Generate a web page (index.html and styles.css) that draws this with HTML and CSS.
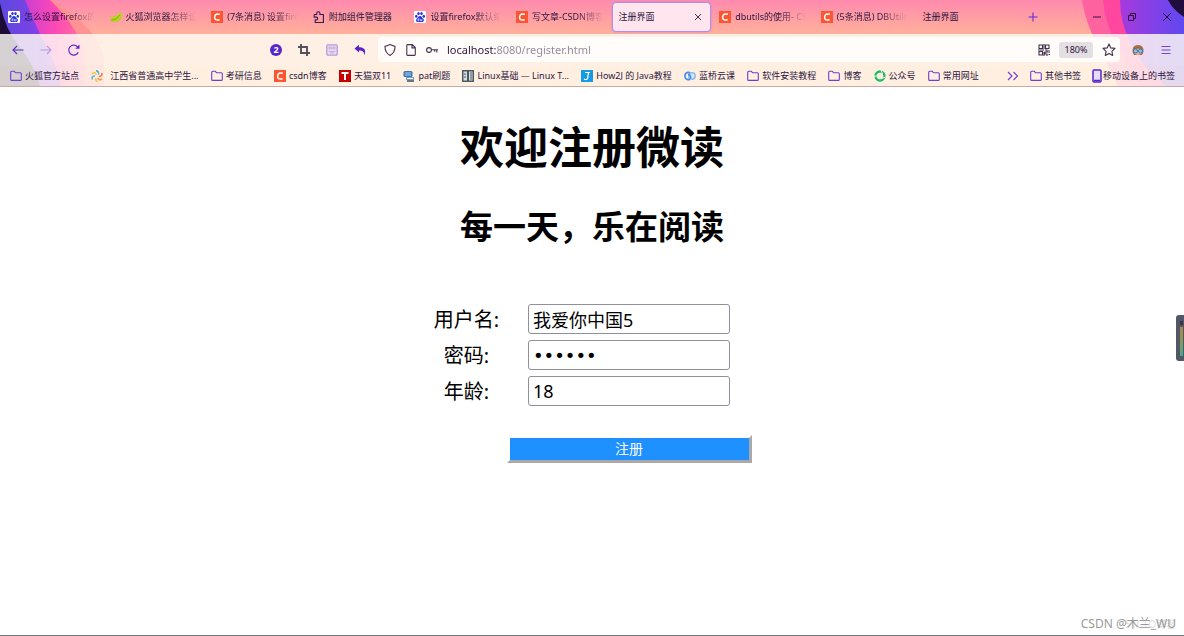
FILE: index.html
```html
<!DOCTYPE html>
<html lang="zh-CN">
<head>
<meta charset="utf-8">
<title>注册界面</title>
<link rel="stylesheet" href="styles.css">
</head>
<body>
<svg class="defs" aria-hidden="true">
  <symbol id="folder" viewBox="0 0 12 12"><path d="M.7 9.4V2.3q0-1 1-1h2.6l1.3 1.5h4.7q1 0 1 1v5.6q0 1-1 1H1.700q-1 0-1-1z" fill="none" stroke="#6b3fd0" stroke-width="1.1"/></symbol>
  <symbol id="csdn" viewBox="0 0 12 12"><path d="M0 0h12v12H0z" fill="#fc5531"/><path d="M8.900 3.300Q4.200 1.900 3.600 6q-.3 4 5 2.800" fill="none" stroke="#fff" stroke-width="1.500"/></symbol>
  <symbol id="baidu" viewBox="0 0 12 12"><rect width="12" height="12" rx="1" fill="#fff"/><g fill="#2932e1"><ellipse cx="2.300" cy="5.200" rx="1.200" ry="1.500"/><ellipse cx="4.500" cy="2.600" rx="1.200" ry="1.600"/><ellipse cx="7.500" cy="2.600" rx="1.200" ry="1.600"/><ellipse cx="9.800" cy="5.300" rx="1.200" ry="1.500"/><path d="M6 5.100c1.500 0 1.800 1.400 3 2.500 1.600 1.500.8 3.500-.9 3.500H3.800C2 11.100 1.400 9 3 7.600 4.200 6.500 4.500 5.100 6 5.100z"/></g><path d="M4.900 7.300v2.500H3.900V8.300h1M6.500 7.900v1.900h1.500V7.900" fill="none" stroke="#fff" stroke-width=".6"/></symbol>
</svg>
<header class="browser">
  <svg class="theme theme-left" viewBox="0 0 110 86" aria-hidden="true">
    <defs>
      <linearGradient id="lb" x1="0" y1="0" x2="1" y2="0"><stop offset="0" stop-color="#5c48df"/><stop offset="1" stop-color="#963dea"/></linearGradient>
      <linearGradient id="lm" x1="0" y1="0" x2="1" y2="0"><stop offset="0" stop-color="#a035e8"/><stop offset=".65" stop-color="#ff49b5"/><stop offset="1" stop-color="#ff759f"/></linearGradient>
    </defs>
    <path d="M0 0h52q46 28 52 58v28H0z" fill="#ff9292"/>
    <path d="M0 0h50q30 28 35 58v28H0z" fill="url(#lm)"/>
    <path d="M0 0h25q10 24 17 38 15 27 19 48H0z" fill="url(#lb)"/>
    <path d="M0 3Q5 30 20 47q15 20 20 39H0z" fill="#1d0c37"/>
  </svg>
  <svg class="theme theme-right" viewBox="0 0 110 86" aria-hidden="true">
    <defs><linearGradient id="rb" x1="0" y1="0" x2="1" y2="0"><stop offset="0" stop-color="#a63add"/><stop offset="1" stop-color="#6048f0"/></linearGradient></defs>
    <path d="M8 0q4 25 15 43 10 22 21 43h66V0z" fill="#ff639f"/>
    <path d="M29 0q2 27 18 51 10 20 20 35h43V0z" fill="#ff479f"/>
    <path d="M46 0q0 22 10 42 13 27 36 44h18V0z" fill="url(#rb)"/>
    <path d="M94 0q5 10 16 17V0z" fill="#210d3d"/>
  </svg>
  <div class="titlebar">
    <nav class="tabs" aria-label="标签页">
      <button class="tab"><svg class="fav"><use href="#baidu"/></svg><span>怎么设置firefox的</span></button>
      <button class="tab"><svg class="fav" viewBox="0 0 12 12"><path d="M.5 6.200Q4 6 7 4.100 9.500 2.500 11.500 1q1 6-1.500 8.200Q7.500 11.500 3 10.500L.3 11.600 1.600 9.700Q.3 8.500.5 6.200z" fill="#b5d321"/><path d="M1 9.400Q6 9.500 10 4" fill="none" stroke="#789b10" stroke-width=".7"/></svg><span>火狐浏览器怎样设</span></button>
      <button class="tab"><svg class="fav"><use href="#csdn"/></svg><span>(7条消息) 设置firef</span></button>
      <button class="tab full"><svg class="fav" viewBox="0 0 12 12"><path d="M1.700 3.500h2V2.300a1.600 1.600 0 0 1 3.200 0v1.200h3.500v8H2.200V8.900h1.100a1.400 1.400 0 0 0 0-2.800H1.200V4q0-.5.5-.5z" fill="none" stroke="#341952" stroke-width="1.100"/></svg><span>附加组件管理器</span></button>
      <button class="tab"><svg class="fav"><use href="#baidu"/></svg><span>设置firefox默认缩</span></button>
      <button class="tab"><svg class="fav"><use href="#csdn"/></svg><span>写文章-CSDN博客</span></button>
      <button class="tab active full"><span>注册界面</span><svg class="close" viewBox="0 0 8 8"><path d="M1 1l6 6M7 1L1 7" stroke="#46304f"/></svg></button>
      <button class="tab"><svg class="fav"><use href="#csdn"/></svg><span>dbutils的使用- CS</span></button>
      <button class="tab"><svg class="fav"><use href="#csdn"/></svg><span>(5条消息) DBUtils</span></button>
      <button class="tab full"><span>注册界面</span></button>
    </nav>
    <button class="add" aria-label="新建标签页"><svg class="i12" viewBox="0 0 12 12"><path d="M6 1.500v9M1.500 6h9" stroke="#642bdd" stroke-width="1.100"/></svg></button>
    <div class="window-controls">
      <button aria-label="最小化"><svg class="i10" viewBox="0 0 10 10"><path d="M1 5h8" stroke="#35133f"/></svg></button>
      <button aria-label="还原"><svg class="i10" viewBox="0 0 10 10"><path d="M1.500 3.500h5v5h-5zM3.500 3V1.500h5v5H7" fill="none" stroke="#35133f"/></svg></button>
      <button aria-label="关闭"><svg class="i10" viewBox="0 0 10 10"><path d="M1 1l8 8M9 1L1 9" stroke="#29103a"/></svg></button>
    </div>
  </div>
  <div class="toolbar">
    <button class="tool" aria-label="后退"><svg class="i12" viewBox="0 0 12 12"><path d="M11.500 6H1M5 2L1 6l4 4" fill="none" stroke="#5b2bc9" stroke-width="1.100"/></svg></button>
    <button class="tool" aria-label="前进"><svg class="i12" viewBox="0 0 12 12"><path d="M.5 6H11M7 2l4 4-4 4" fill="none" stroke="#b69ae5" stroke-width="1.100"/></svg></button>
    <button class="tool" aria-label="刷新"><svg class="i12" viewBox="0 0 12 12"><path d="M10.300 8.200A5 5 0 1 1 9.800 3.100" fill="none" stroke="#5b2bc9" stroke-width="1.200"/><path d="M11.500.5v4.200H7.300z" fill="#5b2bc9"/></svg></button>
    <div class="spring"></div>
    <button class="tool" aria-label="通知"><b class="badge">2</b></button>
    <button class="tool" aria-label="截图"><svg class="i12" viewBox="0 0 12 12"><path d="M3 0v9h9M0 3h9v9" fill="none" stroke="#54515c" stroke-width="1.900"/></svg></button>
    <button class="tool" aria-label="翻译"><svg class="i12" viewBox="0 0 12 12"><rect x=".8" y=".8" width="10.400" height="10.400" rx="1" fill="#e8dced" stroke="#b99bdd" stroke-width="1.300"/><path d="M3 3h2.500v2H3zM7 3h2v2H7zM2.500 7.500h7M4 9h4" fill="none" stroke="#b99bdd" stroke-width=".7"/></svg></button>
    <button class="tool" aria-label="撤销"><svg class="i12" viewBox="0 0 12 12"><path d="M.5 4.500L5 .7v2.600c5.700 0 7.600 3.500 5 8.200.4-3.600-1-5-5-5v2z" fill="#5b20c9"/></svg></button>
    <div class="urlbar">
      <svg class="i12" viewBox="0 0 12 12"><path d="M6 .6l5 1.800q.2 6.300-5 9-5.200-2.700-5-9z" fill="none" stroke="#433251" stroke-width="1.100"/></svg>
      <svg class="i12" viewBox="0 0 12 12"><path d="M2.800.6h4.500l3 3v7q0 .8-.8.8H2.600q-.8 0-.8-.8V1.400q0-.8 1-.8zM7 .8v3.100h3.200" fill="none" stroke="#433251" stroke-width="1.100"/></svg>
      <svg class="i12" viewBox="0 0 12 12"><circle cx="3" cy="6" r="2.400" fill="none" stroke="#433251" stroke-width="1.100"/><path d="M5.500 5.700H12M10.800 6v2.500M8.700 6v1.700" stroke="#433251" stroke-width="1.100"/></svg>
      <input class="address" type="text" aria-label="地址" value="localhost:8080/register.html">
      <svg class="i12 qr" viewBox="0 0 12 12"><path d="M1 1h3.500v3.500H1zM7.500 1H11v3.500H7.500zM1 7.500h3.500V11H1zM6 0v5M0 6h6M7 6h2v2H7v2h2v2M9.500 8H12M11 6v1M6 8v4M10.500 10.500H12" fill="none" stroke="#3e3149" stroke-width="1.100"/></svg>
      <button class="zoom">180%</button>
      <svg class="star" viewBox="0 0 14 14"><path d="M7 1l1.800 3.900 4.200.5-3.100 2.900.8 4.200L7 10.400l-3.700 2.100.8-4.200L1 5.400l4.200-.5z" fill="none" stroke="#433251" stroke-width="1.100" stroke-linejoin="round"/></svg>
    </div>
    <button class="tool avatar" aria-label="账户"><svg class="i12" viewBox="0 0 12 12"><path d="M.5 8Q0 1 6 1t5.500 7L10 11H2z" fill="#a66d43"/><path d="M2 6q4-3 8 0v3q-4 4-8 0z" fill="#e8b288"/><circle cx="3.500" cy="7" r="2" fill="#8bc7f3" stroke="#3577ad"/><circle cx="8.500" cy="7" r="2" fill="#8bc7f3" stroke="#3577ad"/></svg></button>
    <button class="tool" aria-label="菜单"><svg class="i10" viewBox="0 0 10 10"><path d="M.5 1.500h9M.5 5h9M.5 8.500h9" stroke="#7346d5" stroke-width="1.200"/></svg></button>
  </div>
  <div class="bookmarks">
    <div class="marks">
      <a href="#"><svg class="i12"><use href="#folder"/></svg>火狐官方站点</a>
      <a href="#" class="wide"><svg class="i12" viewBox="0 0 12 12"><g fill="none" stroke-width="1.600"><path d="M5.500 4.500Q3 1 1 4" stroke="#f3c64e"/><path d="M7.500 4.500Q8 1 5 .9" stroke="#42b9d0"/><path d="M8 6.500Q12 6 10.500 3" stroke="#ef7651"/><path d="M7 8q1 3 4 1" stroke="#f29b3e"/><path d="M5 8q-1 3 2 3.300" stroke="#e7c94e"/><path d="M4 6Q0 6 1.500 9.500" stroke="#54bbd4"/></g></svg>江西省普通高中学生...</a>
      <a href="#"><svg class="i12"><use href="#folder"/></svg>考研信息</a>
      <a href="#"><svg class="i12"><use href="#csdn"/></svg>csdn博客</a>
      <a href="#"><svg class="i12" viewBox="0 0 12 12"><path d="M0 0h12v12H0z" fill="#c40000"/><path d="M2.500 3h7M6 3v7" stroke="#fff" stroke-width="1.900"/></svg>天猫双11</a>
      <a href="#"><svg class="i12" viewBox="0 0 12 12"><rect x=".5" y="1" width="9" height="6" rx="1.500" fill="#3779b5"/><path d="M2 3h6M2 5h6" stroke="#d4e8f6" stroke-width=".8"/><path d="M3 7h8v3H3z" fill="#729fc0"/><path d="M4 8.500h6" stroke="#fff"/><path d="M4 11h7" stroke="#334e64" stroke-width="1.500"/></svg>pat刷题</a>
      <a href="#"><svg class="i12" viewBox="0 0 12 12"><path d="M0 0h12v12H0z" fill="#4c5961"/><path d="M1.500 1.500H5v9H1.500zM7 1.500h3.500v9H7z" fill="#d7e1e4"/><path d="M2 4h2M2 7h2M8 3h2M8 5h2M8 7h2M8 9h2" stroke="#4c5961"/></svg>Linux基础 — Linux T...</a>
      <a href="#"><svg class="i12" viewBox="0 0 12 12"><path d="M0 0h12v12H0z" fill="#159be5"/><path d="M4 2.500h5M7.500 2.500L6.700 8Q6 10.500 3 9" fill="none" stroke="#fff" stroke-width="1.200"/></svg>How2J 的 Java教程</a>
      <a href="#"><svg class="i12" viewBox="0 0 12 12"><circle cx="8" cy="6" r="3.200" fill="#d9e8fb" stroke="#8db9ef" stroke-width="1.500"/><path d="M6 2.700Q1 1.500.9 6q.1 4.500 5.100 3.300M4 4.500q3 0 2.500 4" fill="none" stroke="#438ee9" stroke-width="1.700"/></svg>蓝桥云课</a>
      <a href="#"><svg class="i12"><use href="#folder"/></svg>软件安装教程</a>
      <a href="#"><svg class="i12"><use href="#folder"/></svg>博客</a>
      <a href="#"><svg class="i12" viewBox="0 0 12 12"><circle cx="6" cy="6" r="4.500" fill="none" stroke="#16bd62" stroke-width="2.300"/><path d="M0 6.500l4-1M7 0l1.500 4M11.500 7L7.500 8.500" stroke="#fff1e4"/></svg>公众号</a>
      <a href="#"><svg class="i12"><use href="#folder"/></svg>常用网址</a>
    </div>
    <div class="marks-end">
      <button class="more" aria-label="更多书签"><svg class="i12" viewBox="0 0 12 12"><path d="M1 2l4 4-4 4M6.500 2l4 4-4 4" fill="none" stroke="#6b3fd0" stroke-width="1.100"/></svg></button>
      <a href="#"><svg class="i12"><use href="#folder"/></svg>其他书签</a>
      <a href="#" class="mobile"><svg class="phone" viewBox="0 0 10 14"><rect x="1" y="1" width="8" height="12" rx="1" fill="#e7dcfb" stroke="#5525c9" stroke-width="1.500"/><path d="M2 11.500h6" stroke="#5525c9" stroke-width="1.500"/></svg>移动设备上的书签</a>
    </div>
  </div>
</header>
<main class="page">
  <h1>欢迎注册微读</h1>
  <h2>每一天，乐在阅读</h2>
  <form class="register">
    <label for="user">用户名:</label><input id="user" type="text" value="我爱你中国5">
    <label for="password">密码:</label><input id="password" type="password" value="123456">
    <label for="age">年龄:</label><input id="age" type="text" value="18">
    <button class="submit" type="button">注册</button>
  </form>
</main>
<svg class="meter" viewBox="0 0 8 46" aria-hidden="true">
  <defs><linearGradient id="mg" x1="0" y1="0" x2="0" y2="1"><stop offset="0" stop-color="#b68250"/><stop offset=".5" stop-color="#879b58"/><stop offset="1" stop-color="#43aa91"/></linearGradient></defs>
  <path d="M8 0H3Q0 0 0 3v40q0 3 3 3h5z" fill="#535765"/><path d="M4 6h3v4H4z" fill="#343846"/><path d="M4 12h3v29H4z" fill="url(#mg)"/>
</svg>
<div class="watermark"><span class="site">51CTO博客</span><span class="author">CSDN @木兰_WU</span></div>
</body>
</html>
```
FILE: styles.css
```css
* { box-sizing: border-box; }
body {
  margin: 0;
  min-height: 100vh;
  display: flex;
  flex-direction: column;
  position: relative;
  background: #fff;
  border-bottom: 1px solid #6b7f80;
  font-family: "Noto Sans", "Noto Sans CJK SC", sans-serif;
  color: #000;
}
button, input { font: inherit; color: inherit; }
svg { display: block; flex: none; }
.defs { position: absolute; width: 0; height: 0; }
.i12, .fav { width: 12px; height: 12px; }
.i10 { width: 10px; height: 10px; }

.browser {
  position: relative;
  background: linear-gradient(#ff8aae, #ffb09b 34px, #ffc09b);
  border-bottom: 1px solid #c9a9a5;
  color: #2b1540;
  font-size: 9px;
  line-height: 14px;
}
.browser button { border: 0; background: none; padding: 0; }
.theme { position: absolute; top: 0; width: 110px; height: 86px; }
.theme-left { left: 0; }
.theme-right { right: 0; }
.titlebar, .toolbar, .bookmarks { position: relative; display: flex; align-items: center; }

.titlebar { height: 34px; padding-left: 2px; }
.tabs { flex: 1; display: grid; grid-template-columns: repeat(10, minmax(0, 1fr)); }
.browser .tab {
  height: 30px;
  padding: 0 6px;
  display: flex;
  align-items: center;
  gap: 4px;
  text-align: left;
  white-space: nowrap;
}
.tab span {
  flex: 1;
  overflow: hidden;
  mask-image: linear-gradient(90deg, #000 calc(100% - 30px), transparent calc(100% - 3px));
}
.browser .tab.active {
  margin-right: 2px;
  background: #ffe6ee;
  border: 1px solid #b48be6;
  border-radius: 4px;
  box-shadow: 0 0 2px #b48be6;
}
.tab.full span { mask-image: none; }
.close { width: 8px; height: 8px; margin-right: 2px; }
.add { width: 30px; display: grid; place-items: center; }
.window-controls { width: 136px; display: flex; padding-left: 32px; }
.window-controls button { flex: 1; display: grid; place-items: center; }

.toolbar { height: 31px; padding: 0 4px; background: rgba(255, 252, 245, .82); }
.tool { width: 28px; height: 28px; display: grid; place-items: center; flex: none; }
.spring { flex: 174 1 0; }
.badge { width: 12px; height: 12px; border-radius: 50%; background: #5727c7; color: #fff; line-height: 12px; }
.urlbar {
  flex: 732 1 0;
  height: 25px;
  margin-left: 4px;
  padding: 0 4px 0 6px;
  display: flex;
  align-items: center;
  gap: 9px;
  border-radius: 4px;
  background: #fffcfa;
}
.address {
  flex: 1;
  min-width: 0;
  padding: 0;
  border: 0;
  outline: 0;
  font-size: 11px;
  color: transparent;
  background: linear-gradient(90deg, #2b1540 50px, #90889a 50px);
  background-clip: text;
}
.browser .zoom { width: 34px; height: 16px; border-radius: 3px; background: #e3dfe3; }
.star { width: 14px; height: 14px; }
.avatar { margin-left: 4px; }

.bookmarks { height: 21px; padding: 0 9px 0 10px; background: rgba(255, 250, 240, .82); }
.bookmarks a { display: flex; align-items: center; gap: 3px; color: inherit; text-decoration: none; white-space: nowrap; }
.bookmarks .wide { gap: 7px; }
.marks { flex: 1; display: flex; justify-content: space-between; }
.marks-end { display: flex; align-items: center; gap: 11px; padding-left: 28px; }
.bookmarks .mobile { gap: 1px; }
.phone { width: 10px; height: 14px; }

.page { flex: 1; display: flex; flex-direction: column; align-items: center; }
h1 { margin: 30px 0 28px; font-size: 44px; line-height: 60px; }
h2 { margin: 0; font-size: 33px; line-height: 44px; }
.register {
  display: grid;
  grid-template-columns: 68px 245px;
  gap: 6px;
  align-items: center;
  justify-items: center;
  margin-top: 55px;
}
.register label { padding-top: 2px; font-size: 20px; line-height: 28px; white-space: nowrap; }
.register input {
  width: 202px;
  height: 30px;
  padding: 0 4px;
  border: 1px solid #8f8f9d;
  border-radius: 3px;
  background: #fff;
  font-size: 18px;
}
.register input[type="password"] { font-family: "DejaVu Sans", sans-serif; }
.register .submit {
  grid-column: 2;
  width: 100%;
  height: 28px;
  margin-top: 23px;
  padding: 0;
  border: 3px solid;
  border-color: #fff #a9a9a9 #a9a9a9 #fff;
  background: #1e90ff padding-box;
  color: #fff;
  font-size: 14px;
  line-height: 20px;
}
.meter { position: absolute; right: 0; top: 315px; width: 8px; height: 46px; }
.watermark { position: absolute; right: 8px; bottom: 2px; display: grid; justify-items: end; font-size: 12px; line-height: 18px; }
.watermark span { grid-area: 1 / 1; }
.site { color: #ddd; font-size: 10px; }
.author { color: #999; }
```
